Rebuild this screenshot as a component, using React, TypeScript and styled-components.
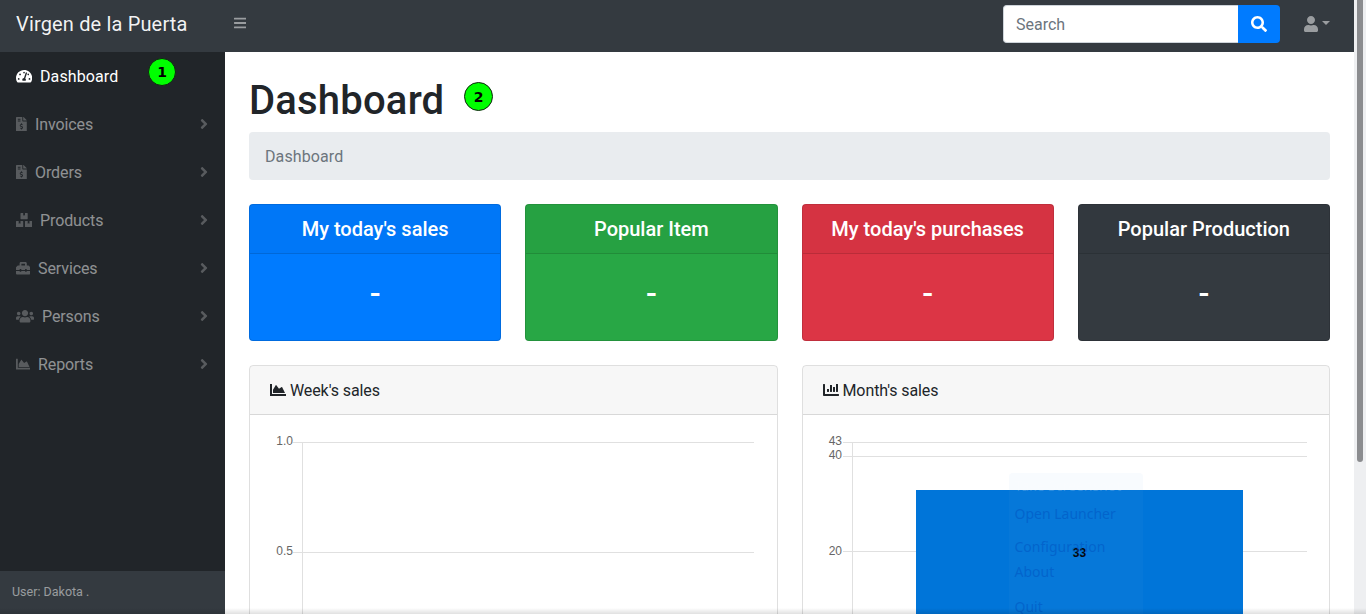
import React from "react";
import styled, { createGlobalStyle } from "styled-components";
import {
  FaAngleRight,
  FaBars,
  FaBoxes,
  FaChartArea,
  FaChartBar,
  FaFileInvoiceDollar,
  FaSearch,
  FaTachometerAlt,
  FaToolbox,
  FaUser,
  FaUsers,
} from "react-icons/fa";

const GlobalStyle = createGlobalStyle`
  html, body {
    margin: 0;
    height: 100%;
    overflow: hidden;
  }

  body {
    font-family: Roboto, "Liberation Sans", sans-serif;
    font-size: 16px;
    color: #212529;
    background: #fff;
  }

  * {
    box-sizing: border-box;
  }
`;

const navItems = [
  { label: "Dashboard", icon: FaTachometerAlt, iconWidth: 16.2, iconBox: 24, active: true },
  { label: "Invoices", icon: FaFileInvoiceDollar, iconWidth: 10.8, iconBox: 19 },
  { label: "Orders", icon: FaFileInvoiceDollar, iconWidth: 10.8, iconBox: 19 },
  { label: "Products", icon: FaBoxes, iconWidth: 16.2, iconBox: 24 },
  { label: "Services", icon: FaToolbox, iconWidth: 14.4, iconBox: 22 },
  { label: "Persons", icon: FaUsers, iconWidth: 18, iconBox: 26 },
  { label: "Reports", icon: FaChartArea, iconWidth: 14.4, iconBox: 22 },
];

const stats = [
  { title: "My today's sales", color: "#007bff" },
  { title: "Popular Item", color: "#28a745" },
  { title: "My today's purchases", color: "#dc3545" },
  { title: "Popular Production", color: "#343a40" },
];

const launcherItems = [
  { label: "Take Screenshot", top: -1, light: true },
  { label: "Open Launcher", top: 27 },
  { label: "Configuration", top: 60 },
  { label: "About", top: 85 },
  { label: "Quit", top: 120 },
];

export default function App() {
  return (
    <Shell>
      <GlobalStyle />
      <Page>
        <TopBar>
          <Brand>Virgen de la Puerta</Brand>
          <MenuToggle>
            <FaBars />
          </MenuToggle>
          <SearchForm>
            <SearchInput placeholder="Search" />
            <SearchButton>
              <FaSearch size={16} />
            </SearchButton>
          </SearchForm>
          <UserMenu>
            <FaUser />
            <Caret />
          </UserMenu>
        </TopBar>
        <Body>
          <Sidebar>
            <Nav>
              {navItems.map((item) => (
                <NavRow key={item.label} $active={item.active}>
                  <NavIcon $box={item.iconBox} $width={item.iconWidth} $active={item.active}>
                    <item.icon />
                  </NavIcon>
                  {item.label}
                  {!item.active && (
                    <NavArrow>
                      <FaAngleRight />
                    </NavArrow>
                  )}
                </NavRow>
              ))}
            </Nav>
            <SidebarFooter>User: Dakota .</SidebarFooter>
            <Marker $size={28} $left={148} $top={6}>
              1
            </Marker>
          </Sidebar>
          <Main>
            <Heading>
              Dashboard
              <Marker $size={29} $left={215} $top={6}>
                2
              </Marker>
            </Heading>
            <Breadcrumb>Dashboard</Breadcrumb>
            <StatGrid>
              {stats.map((stat) => (
                <StatCard key={stat.title} $color={stat.color}>
                  <StatTitle>{stat.title}</StatTitle>
                  <StatValue>-</StatValue>
                </StatCard>
              ))}
            </StatGrid>
            <ChartGrid>
              <ChartCard>
                <ChartHeader>
                  <FaChartArea size={16} />
                  Week's sales
                </ChartHeader>
                <ChartSvg>
                  <GridLine x1={43} x2={504} y1={27.5} y2={27.5} />
                  <GridLine x1={43} x2={504} y1={137.5} y2={137.5} />
                  <GridLine x1={52.5} x2={52.5} y1={27} y2={300} />
                  <AxisText x={43} y={27}>1.0</AxisText>
                  <AxisText x={43} y={137}>0.5</AxisText>
                </ChartSvg>
              </ChartCard>
              <ChartCard>
                <ChartHeader>
                  <FaChartBar size={16} />
                  Month's sales
                </ChartHeader>
                <ChartSvg>
                  <GridLine x1={40} x2={504} y1={27.5} y2={27.5} />
                  <GridLine x1={40} x2={504} y1={41.5} y2={41.5} />
                  <GridLine x1={40} x2={504} y1={136.5} y2={136.5} />
                  <GridLine x1={49.5} x2={49.5} y1={27} y2={300} />
                  <AxisText x={39} y={27}>43</AxisText>
                  <AxisText x={39} y={41}>40</AxisText>
                  <AxisText x={39} y={137}>20</AxisText>
                  <rect x={113} y={75} width={327} height={225} fill="#0075d9" />
                  <BarLabel x={276.5} y={138.5}>33</BarLabel>
                </ChartSvg>
                <GhostMenu>
                  {launcherItems.map((item) => (
                    <GhostItem key={item.label} $top={item.top} $light={item.light}>
                      {item.label}
                    </GhostItem>
                  ))}
                </GhostMenu>
              </ChartCard>
            </ChartGrid>
          </Main>
        </Body>
      </Page>
      <ScrollTrack>
        <ScrollThumb />
      </ScrollTrack>
      <BottomShade />
    </Shell>
  );
}

const Shell = styled.div`
  position: relative;
  display: flex;
  height: 614px;
  overflow: hidden;
`;

const Page = styled.div`
  display: flex;
  flex: 1;
  flex-direction: column;
  min-width: 0;
`;

const TopBar = styled.header`
  display: flex;
  flex: 0 0 52px;
  align-items: center;
  padding-bottom: 4px;
  background: #343a40;
`;

const Brand = styled.div`
  width: 225px;
  padding-left: 16px;
  font-size: 20px;
  letter-spacing: 0.16px;
  color: rgba(255, 255, 255, 0.95);
`;

const MenuToggle = styled.div`
  display: flex;
  margin: 0 0 2px 9px;
  color: rgba(255, 255, 255, 0.5);

  svg {
    width: 12.25px;
    height: 14px;
  }
`;

const SearchForm = styled.form`
  display: flex;
  height: 38px;
  margin-left: auto;
`;

const SearchInput = styled.input`
  width: 235px;
  padding: 0 12px;
  border: 1px solid #ced4da;
  border-right: none;
  border-radius: 4px 0 0 4px;
  font-family: inherit;
  font-size: 16px;
  background: #fff;

  &::placeholder {
    color: #6c757d;
    opacity: 1;
  }
`;

const SearchButton = styled.div`
  display: flex;
  align-items: center;
  justify-content: center;
  width: 42px;
  border-radius: 0 4px 4px 0;
  color: #fff;
  background: #007bff;
`;

const UserMenu = styled.div`
  display: flex;
  align-items: center;
  gap: 4px;
  width: 26px;
  margin: 0 24px;
  color: rgba(255, 255, 255, 0.5);

  svg {
    flex: none;
    width: 14px;
    height: 16px;
  }
`;

const Caret = styled.span`
  margin-top: -2px;
  border-top: 4px solid rgba(255, 255, 255, 0.5);
  border-left: 4px solid transparent;
  border-right: 4px solid transparent;
`;

const Body = styled.div`
  display: flex;
  flex: 1;
  min-height: 0;
`;

const Sidebar = styled.aside`
  position: relative;
  display: flex;
  flex: 0 0 225px;
  flex-direction: column;
  justify-content: space-between;
  background: #212529;
`;

const Nav = styled.nav`
  display: flex;
  flex-direction: column;
`;

const NavRow = styled.div<{ $active?: boolean }>`
  display: flex;
  align-items: center;
  height: 48px;
  padding: 0 16px;
  letter-spacing: ${({ $active }) => ($active ? "0.1px" : "-0.1px")};
  color: ${({ $active }) => ($active ? "#fff" : "rgba(255, 255, 255, 0.5)")};
`;

const NavIcon = styled.span<{ $box: number; $width: number; $active?: boolean }>`
  display: flex;
  flex: 0 0 ${({ $box }) => $box}px;
  color: ${({ $active }) => ($active ? "#fff" : "rgba(255, 255, 255, 0.25)")};

  svg {
    flex: none;
    width: ${({ $width }) => $width}px;
    height: 14.4px;
  }
`;

const NavArrow = styled.span`
  display: flex;
  margin-left: auto;
  margin-right: 1px;
  color: rgba(255, 255, 255, 0.25);

  svg {
    width: 8px;
    height: 16px;
  }
`;

const SidebarFooter = styled.div`
  display: flex;
  align-items: center;
  height: 43px;
  padding: 0 0 2px 12px;
  font-size: 12.5px;
  color: rgba(255, 255, 255, 0.5);
  background: #343a40;
`;

const Marker = styled.span<{ $size: number; $left: number; $top: number }>`
  position: absolute;
  left: ${({ $left }) => $left}px;
  top: ${({ $top }) => $top}px;
  display: flex;
  align-items: center;
  justify-content: center;
  width: ${({ $size }) => $size}px;
  height: ${({ $size }) => $size}px;
  border: 1px solid #112211;
  border-radius: 50%;
  font-family: "DejaVu Sans", sans-serif;
  font-size: 14px;
  font-weight: 700;
  line-height: 1;
  letter-spacing: 0;
  color: #000;
  background: #00ff00;
`;

const Main = styled.main`
  flex: 1;
  min-width: 0;
  padding: 24px 24px 0;
  overflow: hidden;
  background: #fff;
`;

const Heading = styled.h1`
  position: relative;
  height: 48px;
  margin: 0 0 8px;
  padding-top: 2px;
  font-size: 40px;
  font-weight: 500;
  line-height: 46px;
  letter-spacing: 0.2px;
`;

const Breadcrumb = styled.div`
  height: 48px;
  margin-bottom: 24px;
  padding: 13px 16px 0;
  border-radius: 4px;
  line-height: 24px;
  letter-spacing: 0.1px;
  color: #6c757d;
  background: #e9ecef;
`;

const StatGrid = styled.section`
  display: grid;
  grid-template-columns: repeat(4, 1fr);
  gap: 24px;
  margin-bottom: 24px;
`;

const StatCard = styled.article<{ $color: string }>`
  height: 137px;
  border: 1px solid rgba(0, 0, 0, 0.125);
  border-radius: 4px;
  color: #fff;
  background: ${({ $color }) => $color};
`;

const StatTitle = styled.h5`
  margin: 0;
  padding: 12px 20px;
  border-bottom: 1px solid rgba(0, 0, 0, 0.125);
  font-size: 20px;
  font-weight: 500;
  line-height: 24px;
  text-align: center;
  background: rgba(0, 0, 0, 0.03);
`;

const StatValue = styled.div`
  padding-top: 19px;
  font-size: 32px;
  font-weight: 500;
  line-height: 40px;
  text-align: center;
`;

const ChartGrid = styled.section`
  display: grid;
  grid-template-columns: repeat(2, 1fr);
  gap: 24px;
`;

const ChartCard = styled.article`
  position: relative;
  height: 350px;
  border: 1px solid rgba(0, 0, 0, 0.125);
  border-radius: 4px;
  overflow: hidden;
`;

const ChartHeader = styled.div`
  display: flex;
  align-items: center;
  gap: 4px;
  height: 49px;
  padding: 0 20px;
  border-bottom: 1px solid rgba(0, 0, 0, 0.125);
  letter-spacing: -0.1px;
  background: rgba(0, 0, 0, 0.03);
`;

const ChartSvg = styled.svg`
  display: block;
  width: 100%;
  height: 300px;
`;

const GridLine = styled.line`
  stroke: #e0e0e0;
  stroke-width: 1;
`;

const AxisText = styled.text`
  font-family: "Liberation Sans", Arial, sans-serif;
  font-size: 12px;
  fill: #666;
  text-anchor: end;
  dominant-baseline: middle;
`;

const BarLabel = styled.text`
  font-family: "Liberation Sans", Arial, sans-serif;
  font-size: 12px;
  font-weight: 700;
  fill: #000;
  text-anchor: middle;
  dominant-baseline: middle;
`;

const GhostMenu = styled.div`
  position: absolute;
  left: 206px;
  top: 107px;
  width: 134px;
  height: 200px;
  border-radius: 4px;
  background: rgba(120, 180, 230, 0.05);
  pointer-events: none;
`;

const GhostItem = styled.div<{ $top: number; $light?: boolean }>`
  position: absolute;
  left: 6px;
  top: ${({ $top }) => $top + 4}px;
  font-family: "Noto Sans", sans-serif;
  font-size: 14px;
  line-height: 20px;
  white-space: nowrap;
  color: ${({ $light }) =>
    $light ? "rgba(255, 255, 255, 0.18)" : "rgba(0, 80, 190, 0.5)"};
`;

const ScrollTrack = styled.div`
  flex: 0 0 12px;
  background: #eeeff1;
`;

const ScrollThumb = styled.div`
  width: 6px;
  height: 462px;
  margin-left: 3px;
  border-radius: 0 0 3px 3px;
  background: #8b8c8f;
`;

const BottomShade = styled.div`
  position: absolute;
  left: 0;
  right: 0;
  bottom: 0;
  height: 6px;
  background: linear-gradient(rgba(0, 0, 0, 0), rgba(0, 0, 0, 0.12));
  pointer-events: none;
`;
